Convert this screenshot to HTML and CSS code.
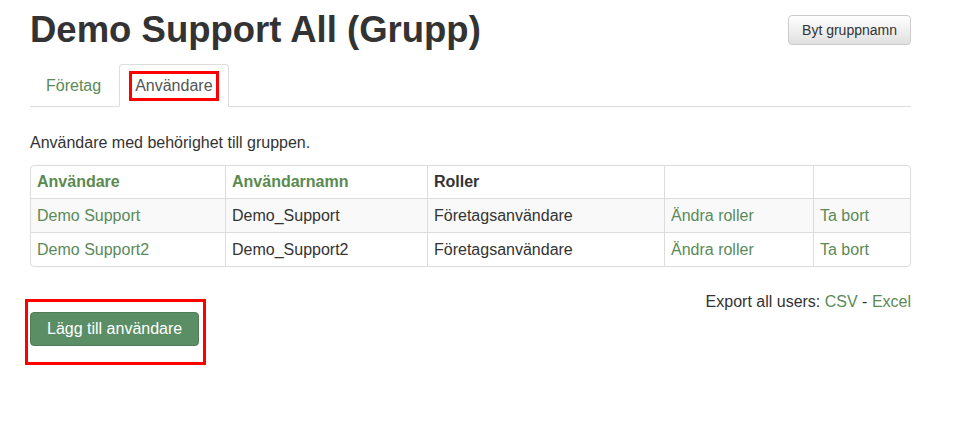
FILE: index.html
```html
<!DOCTYPE html>
<html lang="sv">
<head>
    <meta charset="UTF-8">
    <title>Demo Support All (Grupp)</title>
    <link rel="stylesheet" href="styles.css">
</head>
<body>
    <div class="page">
        <div class="page-header">
            <h1>Demo Support All (Grupp)</h1>
            <button type="button" class="btn btn-default">Byt gruppnamn</button>
        </div>

        <ul class="nav-tabs">
            <li><a href="#">Företag</a></li>
            <li class="active"><a href="#"><span class="mark mark-tab">Användare</span></a></li>
        </ul>

        <p class="intro">Användare med behörighet till gruppen.</p>

        <div class="table-wrap">
            <table class="users">
                <thead>
                    <tr>
                        <th class="col-name"><a href="#">Användare</a></th>
                        <th class="col-user"><a href="#">Användarnamn</a></th>
                        <th class="col-role">Roller</th>
                        <th class="col-edit"></th>
                        <th></th>
                    </tr>
                </thead>
                <tbody>
                    <tr>
                        <td><a href="#">Demo Support</a></td>
                        <td>Demo_Support</td>
                        <td>Företagsanvändare</td>
                        <td><a href="#">Ändra roller</a></td>
                        <td><a href="#">Ta bort</a></td>
                    </tr>
                    <tr>
                        <td><a href="#">Demo Support2</a></td>
                        <td>Demo_Support2</td>
                        <td>Företagsanvändare</td>
                        <td><a href="#">Ändra roller</a></td>
                        <td><a href="#">Ta bort</a></td>
                    </tr>
                </tbody>
            </table>
        </div>

        <div class="export">Export all users: <a href="#">CSV</a> - <a href="#">Excel</a></div>

        <div class="actions">
            <span class="mark mark-btn"><button type="button" class="btn btn-success">Lägg till användare</button></span>
        </div>
    </div>
</body>
</html>
```

FILE: styles.css
```css
body {
    font-family: "Liberation Sans", Arial, sans-serif;
    font-size: 16px;
    line-height: 21px;
    color: #333;
    background: #fff;
    margin: 0;
}
a {
    color: #5a8a58;
    text-decoration: none;
}
.page {
    width: 881px;
    margin-left: 30px;
    padding-bottom: 60px;
}
.page-header {
    display: flex;
    justify-content: space-between;
    align-items: flex-start;
    padding-top: 8px;
}
.page-header h1 {
    margin: 0;
    font-size: 36.5px;
    line-height: 44px;
    font-weight: bold;
}
.btn {
    font-family: inherit;
    border: 1px solid #ccc;
    border-radius: 4px;
    cursor: pointer;
}
.btn-default {
    margin-top: 7px;
    height: 30px;
    padding: 0 13px;
    font-size: 14px;
    color: #333;
    background: linear-gradient(#fff, #e0e0e0);
}
.nav-tabs {
    display: flex;
    list-style: none;
    margin: 12px 0 0;
    padding: 0;
    border-bottom: 1px solid #ddd;
}
.nav-tabs li {
    margin-right: 2px;
    margin-bottom: -1px;
}
.nav-tabs a {
    display: block;
    padding: 10px 15px;
    border: 1px solid transparent;
    border-radius: 4px 4px 0 0;
}
.nav-tabs .active a {
    color: #555;
    background: #fff;
    border-color: #ddd #ddd transparent;
}
.mark {
    position: relative;
    display: inline-block;
    vertical-align: top;
}
.mark::after {
    content: "";
    position: absolute;
    border: 3px solid #f00;
}
.mark-tab::after {
    top: -4px;
    bottom: -5px;
    left: -6px;
    right: -6px;
}
.mark-btn::after {
    top: -13px;
    bottom: -19px;
    left: -5px;
    right: -7px;
}
.intro {
    margin: 25px 0 12px;
}
.table-wrap {
    border: 1px solid #ddd;
    border-radius: 4px;
    overflow: hidden;
}
.users {
    width: 100%;
    border-collapse: collapse;
}
.users th, .users td {
    text-align: left;
    padding: 6px;
    border-left: 1px solid #ddd;
    border-top: 1px solid #ddd;
}
.users th {
    line-height: 20px;
}
.users th a {
    color: #5a8a4f;
}
.users th:first-child, .users td:first-child {
    border-left: 0;
}
.users thead th {
    border-top: 0;
}
.users tbody tr:nth-child(odd) {
    background: #f9f9f9;
}
.col-name { width: 182px; }
.col-user { width: 189px; }
.col-role { width: 224px; }
.col-edit { width: 136px; }
.export {
    text-align: right;
    margin-top: 24px;
}
.actions {
    margin-top: 0;
}
.btn-success {
    display: block;
    height: 34px;
    padding: 0 16px;
    font-size: 16px;
    color: #fff;
    background: #5b8e65;
    border-color: #4f7d58;
}
```
